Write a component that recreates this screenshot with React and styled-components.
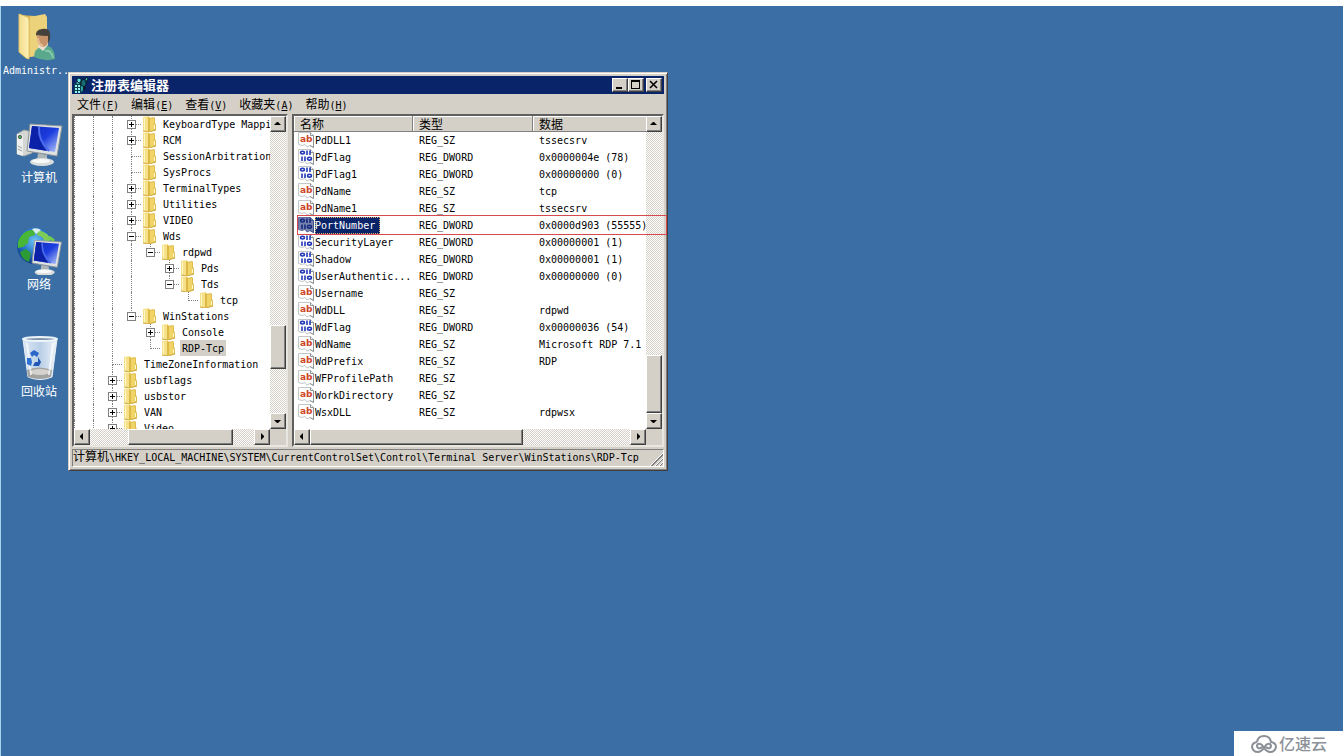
import React, { useState } from "react";
import styled, { createGlobalStyle, css } from "styled-components";

const GlobalStyle = createGlobalStyle`
    * {
        box-sizing: border-box;
    }

    body {
        margin: 0;
        background: #ffffff;
        font-family: "DejaVu Sans Mono", "Noto Sans CJK SC", monospace;
        font-size: 10px;
        color: #000000;
    }

    button {
        padding: 0;
        font: inherit;
        color: inherit;
    }
`;

const Screen = styled.div`
    min-height: 100vh;
    display: flex;
    flex-direction: column;
    border-top: 6px solid #ffffff;
`;

const Desktop = styled.main`
    position: relative;
    flex: 1;
    overflow: hidden;
    background: #3a6ea5;
    border-left: 1px solid #a5d5ee;
`;

const Cjk = styled.span`
    font-family: "Noto Sans CJK SC", sans-serif;
    font-size: 12px;
`;

/* ---------- desktop icons ---------- */

const Shortcuts = styled.nav`
    width: 76px;
    padding-top: 7px;
    display: flex;
    flex-direction: column;
    align-items: center;
    gap: 41px;
`;

const Shortcut = styled.a`
    height: 66px;
    display: flex;
    flex-direction: column;
    align-items: center;
    color: #ffffff;
    text-decoration: none;
    white-space: nowrap;
    line-height: ${(props) => (props.$cjk ? "18px" : "20px")};

    & > svg {
        flex: none;
        display: block;
    }
`;

/* ---------- window ---------- */

const raised = css`
    border: 1px solid;
    border-color: #ffffff #404040 #404040 #ffffff;
    box-shadow: inset -1px -1px 0 #808080;
    background: #d4d0c8;
`;

const Window = styled.section`
    position: absolute;
    left: 67px;
    top: 66px;
    width: 600px;
    padding: 2px;
    border: 1px solid;
    border-color: #d4d0c8 #404040 #404040 #d4d0c8;
    box-shadow: inset 1px 1px 0 #ffffff, inset -1px -1px 0 #808080;
    background: #d4d0c8;
`;

const WindowBody = styled.div`
    padding: 1px;
`;

const TitleBar = styled.header`
    height: 18px;
    padding: 0 2px 0 1px;
    display: flex;
    align-items: center;
    background: #0a246a;
    color: #ffffff;
`;

const Title = styled.h1`
    flex: 1;
    margin: 0 0 0 2px;
    font-family: "Noto Sans CJK SC", sans-serif;
    font-size: 13px;
    font-weight: 700;
    line-height: 18px;
`;

const TitleButton = styled.button`
    ${raised}
    width: 16px;
    height: 14px;
    margin-left: ${(props) => (props.$apart ? "2px" : "0")};

    & > svg {
        display: block;
    }
`;

const MenuBar = styled.nav`
    height: 20px;
    display: flex;
`;

const MenuItem = styled.button`
    padding: 0 7px 0 5px;
    border: 0;
    background: none;
    line-height: 20px;
    white-space: nowrap;
`;

const Panes = styled.div`
    display: grid;
    grid-template-columns: 216px minmax(0, 1fr);
    gap: 4px;
`;

const Pane = styled.div`
    height: 333px;
    display: grid;
    grid-template-columns: minmax(0, 1fr) 16px;
    grid-template-rows: minmax(0, 1fr) 16px;
    border: 2px solid;
    border-color: #606060 #e8e6e0 #e8e6e0 #606060;
    background: #d4d0c8;
`;

const Viewport = styled.div`
    overflow: hidden;
    background: #ffffff;
`;

const ScrollBar = styled.div`
    display: flex;
    flex-direction: ${(props) => (props.$vertical ? "column" : "row")};
    background: repeating-conic-gradient(#ffffff 0 25%, #d4d0c8 0 50%) 0 0 / 2px 2px;
`;

const ArrowButton = styled.button`
    ${raised}
    flex: none;
    width: 16px;
    height: 16px;

    & > svg {
        display: block;
    }
`;

const Track = styled.div`
    flex: 1;
    display: flex;
    flex-direction: inherit;
`;

const Thumb = styled.div`
    ${raised}
    flex: none;
    ${(props) => (props.$vertical
        ? css`height: ${props.$size}px; margin-top: ${props.$offset}px; width: 16px;`
        : css`width: ${props.$size}px; margin-left: ${props.$offset}px; height: 16px;`)}
`;

/* ---------- tree ---------- */

const Tree = styled.ul`
    margin: 0;
    padding: 0;
    list-style: none;
`;

const TreeRow = styled.li`
    height: 16px;
    display: flex;
    line-height: 18px;
    white-space: pre;
`;

const RootGuide = styled.span`
    flex: none;
    width: 10px;
    border-left: 1px dotted #808080;
`;

const Guide = styled.span`
    flex: none;
    width: 10px;
    margin-left: 9px;
    border-left: 1px ${(props) => (props.$blank ? "solid transparent" : "dotted #808080")};
`;

const Branch = styled.span`
    flex: none;
    width: 19px;
    display: grid;
    grid-template-columns: 9px 10px;
    grid-template-rows: 9px 7px;

    &::before {
        content: "";
        grid-area: 1 / 2;
        border-left: 1px dotted #808080;
        border-bottom: 1px dotted #808080;
    }

    &::after {
        content: "";
        grid-area: 2 / 2;
        border-left: ${(props) => (props.$last ? "0" : "1px dotted #808080")};
    }
`;

const Expander = styled.button`
    grid-area: 1 / 1 / 3 / 3;
    align-self: start;
    z-index: 1;
    width: 9px;
    height: 9px;
    margin: 4px 0 0 5px;
    border: 1px solid #808080;
    background: #ffffff;

    & > svg {
        display: block;
    }
`;

const FolderSlot = styled.span`
    flex: none;
    width: 20px;
    padding-left: 1px;

    & > svg {
        display: block;
    }
`;

const TreeLabel = styled.span`
    padding: 0 2px;
    background: ${(props) => (props.$selected ? "#d4d0c8" : "transparent")};
`;

/* ---------- value list ---------- */

const Table = styled.table`
    width: 100%;
    table-layout: fixed;
    border-collapse: separate;
    border-spacing: 0;
    text-align: left;
    white-space: nowrap;
`;

const HeadCell = styled.th`
    width: ${(props) => props.$width || "auto"};
    height: 16px;
    padding: 0 6px;
    border-right: 1px solid #808080;
    border-bottom: 1px solid #808080;
    box-shadow: inset 1px 1px 0 #ffffff;
    background: #d4d0c8;
    font-family: "Noto Sans CJK SC", sans-serif;
    font-size: 12px;
    font-weight: 400;
    line-height: 15px;

    &:last-child {
        border-right: 0;
    }
`;

const Cell = styled.td`
    height: 17px;
    padding: 0 0 0 6px;
    line-height: 17px;
`;

const NameCell = styled(Cell)`
    padding: 0 0 0 4px;

    & > div {
        height: 17px;
        display: flex;
    }

    & svg {
        flex: none;
    }
`;

const ValueName = styled.span`
    margin-left: 1px;
    padding: 0 5px 0 0;
    ${(props) => props.$selected && css`
        background: #0a246a;
        color: #ffffff;
        outline: 1px dotted #d8b070;
        outline-offset: -1px;
    `}
`;

const Highlight = styled.div`
    position: absolute;
    left: 228px;
    right: 0;
    top: 142px;
    height: 20px;
    border: 1px solid #d8494f;
    pointer-events: none;
`;

const StatusBar = styled.footer`
    height: 18px;
    margin-top: 2px;
    display: flex;
    justify-content: space-between;
    align-items: flex-end;
    border: 1px solid;
    border-color: #808080 #ffffff #ffffff #808080;
    line-height: 16px;
    white-space: nowrap;
`;

const Watermark = styled.div`
    position: absolute;
    right: 0;
    bottom: 0;
    height: 25px;
    padding: 0 16px 0 17px;
    display: flex;
    align-items: center;
    gap: 2px;
    background: #ffffff;
    color: #8c9198;
    font-family: "Noto Sans CJK SC", sans-serif;
    font-size: 16px;
    font-weight: 500;
    line-height: 25px;
`;

/* ---------- drawings ---------- */

function UserFolderIcon() {
    return (
        <svg width="48" height="48" viewBox="0 0 48 48">
            <defs>
                <linearGradient id="ufBack" x1="0" x2="1">
                    <stop offset="0" stopColor="#c9a23f" />
                    <stop offset="1" stopColor="#f6e08c" />
                </linearGradient>
                <linearGradient id="ufFront" x1="0" x2="1">
                    <stop offset="0" stopColor="#f3dc8c" />
                    <stop offset="1" stopColor="#fdf2b8" />
                </linearGradient>
            </defs>
            <path d="M5 2L20 3L31 4V42L14 44Z" fill="url(#ufBack)" />
            <path d="M15 4L30 1L32 4V40L15 44Z" fill="#ecd27a" />
            <path d="M4 1L12 4Q14 5 14 8L14 46L11 45L4 39Z" fill="url(#ufFront)" stroke="#e2c468" strokeWidth="1" />
            <path d="M19 44Q19 36 26 34L33 33Q40 35 40 46Q30 49 19 44Z" fill="#5aa98d" />
            <path d="M23 34L28 38L33 32V28H24Z" fill="#e9e0d0" />
            <path d="M30 38Q36 36 38 45" stroke="#87c9ac" strokeWidth="2" fill="none" />
            <ellipse cx="28" cy="25" rx="6" ry="9" fill="#c79368" />
            <path d="M21 23Q20 17 27 16Q34 15 35 20Q36 26 33 30L33 23Q27 23 22 22Z" fill="#45413b" />
            <path d="M23 25Q23 31 28 33" stroke="#e7bd93" strokeWidth="2" fill="none" />
        </svg>
    );
}

function Monitor() {
    return (
        <g>
            <path d="M23 33L32 35L32 41H22Z" fill="#aeb5b8" />
            <ellipse cx="27" cy="42" rx="12" ry="4" fill="#d9dddd" />
            <ellipse cx="26" cy="41" rx="9" ry="2" fill="#f7f8f8" />
            <path d="M15 4L47 6L42 36L12 31Z" fill="#dfe2e3" stroke="#8e9699" strokeWidth="1" />
            <path d="M17 6L44 8L40 32L14 28Z" fill="url(#screenBlue)" />
            <path d="M17 6L24 7Q22 19 32 31L14 28Z" fill="#0b21a8" />
            <path d="M24 7Q23 20 34 31" stroke="#4a6bea" strokeWidth="2" fill="none" />
        </g>
    );
}

function ComputerIcon() {
    return (
        <svg width="48" height="48" viewBox="0 0 48 48">
            <defs>
                <linearGradient id="screenBlue" x1="0" y1="0" x2="1" y2="1">
                    <stop offset="0" stopColor="#1029b8" />
                    <stop offset="0.5" stopColor="#1c3ddf" />
                    <stop offset="1" stopColor="#b9cbf8" />
                </linearGradient>
            </defs>
            <path d="M2 14L9 10L17 12V33L9 36L2 34Z" fill="#d3d6d3" stroke="#a1a7a4" strokeWidth="1" />
            <path d="M2 14L8 15V36L2 34Z" fill="#eef0ef" />
            <circle cx="5" cy="17" r="2" fill="#3d4c45" />
            <circle cx="5" cy="17" r="1" fill="#43d24f" />
            <path d="M3 26L7 28M3 29L7 31" stroke="#9aa09c" />
            <Monitor />
        </svg>
    );
}

function NetworkIcon() {
    return (
        <svg width="48" height="48" viewBox="0 0 48 48">
            <defs>
                <radialGradient id="globe" cx="0.5" cy="0.35" r="0.6">
                    <stop offset="0" stopColor="#6ec6f2" />
                    <stop offset="0.6" stopColor="#2a76cb" />
                    <stop offset="1" stopColor="#113f8d" />
                </radialGradient>
            </defs>
            <circle cx="20" cy="19" r="18" fill="url(#globe)" />
            <path d="M6 9Q11 2 19 3L20 8L14 10L13 16L8 20L3 21Q2 14 6 9Z" fill="#48b637" />
            <path d="M23 3Q33 5 36 13L31 16L27 10L22 8Z" fill="#7ccc55" />
            <path d="M5 25L11 22L16 26L14 35Q7 33 5 25Z" fill="#2d9b35" />
            <path d="M17 2Q22 0 26 3L21 7Z" fill="#d8f0ed" />
            <path d="M34 10L38 13L37 17" stroke="#71cb4c" strokeWidth="3" fill="none" />
            <g transform="translate(7 10) scale(0.84)">
                <Monitor />
            </g>
        </svg>
    );
}

function RecycleIcon() {
    return (
        <svg width="48" height="48" viewBox="0 0 48 48">
            <defs>
                <linearGradient id="bin" x1="0" x2="1">
                    <stop offset="0" stopColor="#dce9f4" />
                    <stop offset="0.5" stopColor="#b9cee6" />
                    <stop offset="1" stopColor="#edf4fa" />
                </linearGradient>
            </defs>
            <path d="M8 5H42L37 43Q25 48 13 43Z" fill="url(#bin)" stroke="#e8f1f8" />
            <path d="M12 36Q24 31 37 36L36 43Q25 47 13 43Z" fill="#a3a3a1" />
            <ellipse cx="25" cy="38" rx="10" ry="3" fill="#d4d2ce" />
            <path d="M12 9L16 41M38 9L34 41" stroke="#ffffff" strokeWidth="2" opacity="0.7" />
            <ellipse cx="25" cy="5" rx="17" ry="2" fill="#8095aa" stroke="#edf4f9" strokeWidth="2" />
            <path d="M15 19L19 16L24 19L22 23L19 21L17 23Z" fill="#2b66c9" />
            <path d="M12 24L16 24L17 28L16 32L12 30Z" fill="#2f70d4" />
            <path d="M23 23L26 28L24 32H18L20 28L23 28Z" fill="#2056b8" />
        </svg>
    );
}

function RegeditIcon() {
    return (
        <svg width="16" height="16" viewBox="0 0 16 16">
            <path d="M1 7L4 5H11V13L8 16H1Z" fill="#0c3f49" />
            <path d="M2 8H4V10H2ZM5 8H7V10H5ZM2 11H4V13H2ZM5 11H7V13H5ZM2 14H4V16H2ZM5 14H7V16H5Z" fill="#8ff4f6" />
            <path d="M3 6L5 5L7 6L5 7Z" fill="#49cdd4" />
            <path d="M8 8L10 7V13L8 15Z" fill="#2aa3ad" />
            <path d="M4 2L6 1L8 2V5L6 6L4 4Z" fill="#5adfe5" stroke="#072b33" />
            <path d="M8 4L11 2L13 4V8L11 10L8 8Z" fill="#156b76" stroke="#06161c" />
            <path d="M12 2L14 0L15 2L14 4L12 4Z" fill="#2fb9c2" stroke="#06161c" />
            <path d="M11 9L13 11L10 14Z" fill="#06161c" />
        </svg>
    );
}

function FolderIcon() {
    return (
        <svg width="16" height="16" viewBox="0 0 16 16">
            <path d="M7 2L12 1L13 2V7L14 9V14L7 16Z" fill="#dfbd4c" />
            <path d="M8 3L12 2V14L8 15Z" fill="#f0d468" />
            <path d="M1 1L7 0L8 2V15L7 16L1 15Z" fill="#f6e18a" />
            <path d="M6 1L8 2V15L6 16Z" fill="#dcb845" />
            <path d="M2.5 2V14" stroke="#fff7c8" />
            <path d="M12.5 9V13" stroke="#fff6cf" />
            <path d="M1 15L7 16L14 14" stroke="#cfac45" fill="none" />
        </svg>
    );
}

function ValueIcon({ type, selected }) {
    const page = "M0.5 0.5H12.5L15.5 3.5V15.5L12 13.5L9 15L7 12.5L4 13.5L0.5 12.5Z";
    return (
        <svg width="16" height="16" viewBox="0 0 16 16">
            <path d={page} fill={selected ? "#7482ac" : "#fdfdfc"} stroke={selected ? "#596a9c" : "#c3c7ca"} />
            <path d="M12.5 0.5V3.5H15.5V15.5L12 13.5" fill="none" stroke={selected ? "#44558c" : "#8b9397"} />
            {type === "REG_SZ" ? (
                <text x="2" y="10" fontFamily="DejaVu Sans" fontSize="9" fontWeight="700" fill="#cf4527">ab</text>
            ) : (
                <g fill="none" stroke={selected ? "#17297f" : "#2438b8"} strokeWidth="1.6">
                    <ellipse cx="4.5" cy="3.6" rx="1.9" ry="1.4" />
                    <path d="M9 1.5V6M12 1.5V6" />
                    <path d="M4 7.5V12M7 7.5V12" />
                    <ellipse cx="11.5" cy="9.7" rx="1.9" ry="1.4" />
                </g>
            )}
        </svg>
    );
}

const arrows = {
    up: "M7 5L10 8H3L6 5Z",
    down: "M3 6H10L7 9H6Z",
    left: "M5 6L8 3V10L5 7Z",
    right: "M9 6L6 3V10L9 7Z",
};

function Arrow({ to }) {
    return (
        <ArrowButton type="button" aria-label={to}>
            <svg width="14" height="14" viewBox="0 0 14 14">
                <path d={arrows[to]} fill="#000000" />
            </svg>
        </ArrowButton>
    );
}

function Scroll({ vertical, offset, size }) {
    return (
        <ScrollBar $vertical={vertical}>
            <Arrow to={vertical ? "up" : "left"} />
            <Track>
                <Thumb $vertical={vertical} $offset={offset} $size={size} />
            </Track>
            <Arrow to={vertical ? "down" : "right"} />
        </ScrollBar>
    );
}

/* ---------- data ---------- */

const shortcuts = [
    { label: "Administr...", Icon: UserFolderIcon },
    { label: "计算机", cjk: true, Icon: ComputerIcon },
    { label: "网络", cjk: true, Icon: NetworkIcon },
    { label: "回收站", cjk: true, Icon: RecycleIcon },
];

const menus = [
    ["文件", "F"],
    ["编辑", "E"],
    ["查看", "V"],
    ["收藏夹", "A"],
    ["帮助", "H"],
];

// guides: "|" draws a line through the row, " " leaves the column empty
const keys = [
    { name: "KeyboardType Mappi", guides: "||", sign: "+" },
    { name: "RCM", guides: "||", sign: "+" },
    { name: "SessionArbitration", guides: "||" },
    { name: "SysProcs", guides: "||" },
    { name: "TerminalTypes", guides: "||", sign: "+" },
    { name: "Utilities", guides: "||", sign: "+" },
    { name: "VIDEO", guides: "||", sign: "+" },
    { name: "Wds", guides: "||", sign: "-" },
    { name: "rdpwd", guides: "|||", sign: "-", last: true },
    { name: "Pds", guides: "||| ", sign: "+" },
    { name: "Tds", guides: "||| ", sign: "-", last: true },
    { name: "tcp", guides: "|||  ", last: true },
    { name: "WinStations", guides: "||", sign: "-", last: true },
    { name: "Console", guides: "|| ", sign: "+" },
    { name: "RDP-Tcp", guides: "|| ", last: true },
    { name: "TimeZoneInformation", guides: "|" },
    { name: "usbflags", guides: "|", sign: "+" },
    { name: "usbstor", guides: "|", sign: "+" },
    { name: "VAN", guides: "|", sign: "+" },
    { name: "Video", guides: "|", sign: "+" },
];

const values = [
    ["PdDLL1", "REG_SZ", "tssecsrv"],
    ["PdFlag", "REG_DWORD", "0x0000004e (78)"],
    ["PdFlag1", "REG_DWORD", "0x00000000 (0)"],
    ["PdName", "REG_SZ", "tcp"],
    ["PdName1", "REG_SZ", "tssecsrv"],
    ["PortNumber", "REG_DWORD", "0x0000d903 (55555)"],
    ["SecurityLayer", "REG_DWORD", "0x00000001 (1)"],
    ["Shadow", "REG_DWORD", "0x00000001 (1)"],
    ["UserAuthentic...", "REG_DWORD", "0x00000000 (0)"],
    ["Username", "REG_SZ", ""],
    ["WdDLL", "REG_SZ", "rdpwd"],
    ["WdFlag", "REG_DWORD", "0x00000036 (54)"],
    ["WdName", "REG_SZ", "Microsoft RDP 7.1"],
    ["WdPrefix", "REG_SZ", "RDP"],
    ["WFProfilePath", "REG_SZ", ""],
    ["WorkDirectory", "REG_SZ", ""],
    ["WsxDLL", "REG_SZ", "rdpwsx"],
];

function KeyTree({ selected, onSelect }) {
    return (
        <Tree>
            {keys.map((key) => (
                <TreeRow key={key.name} onClick={() => onSelect(key.name)}>
                    <RootGuide />
                    {key.guides.split("").map((guide, index) => (
                        <Guide key={index} $blank={guide === " "} />
                    ))}
                    <Branch $last={key.last}>
                        {key.sign && (
                            <Expander type="button" aria-label={key.sign === "+" ? "展开" : "折叠"}>
                                <svg width="7" height="7" viewBox="0 0 7 7">
                                    <path d={key.sign === "+" ? "M1 3H6V4H1ZM3 1H4V6H3Z" : "M1 3H6V4H1Z"} fill="#000000" />
                                </svg>
                            </Expander>
                        )}
                    </Branch>
                    <FolderSlot><FolderIcon /></FolderSlot>
                    <TreeLabel $selected={selected === key.name}>{key.name}</TreeLabel>
                </TreeRow>
            ))}
        </Tree>
    );
}

function ValueTable({ selected, onSelect }) {
    return (
        <Table>
            <thead>
                <tr>
                    <HeadCell $width="119px">名称</HeadCell>
                    <HeadCell $width="120px">类型</HeadCell>
                    <HeadCell>数据</HeadCell>
                </tr>
            </thead>
            <tbody>
                {values.map(([name, type, data]) => (
                    <tr key={name} onClick={() => onSelect(name)}>
                        <NameCell>
                            <div>
                                <ValueIcon type={type} selected={selected === name} />
                                <ValueName $selected={selected === name}>{name}</ValueName>
                            </div>
                        </NameCell>
                        <Cell>{type}</Cell>
                        <Cell>{data}</Cell>
                    </tr>
                ))}
            </tbody>
        </Table>
    );
}

function App() {
    const [currentKey, setCurrentKey] = useState("RDP-Tcp");
    const [currentValue, setCurrentValue] = useState("PortNumber");

    return (
        <Screen>
            <GlobalStyle />
            <Desktop>
                <Shortcuts>
                    {shortcuts.map(({ label, cjk, Icon }) => (
                        <Shortcut key={label} href="#" $cjk={cjk}>
                            <Icon />
                            {cjk ? <Cjk>{label}</Cjk> : label}
                        </Shortcut>
                    ))}
                </Shortcuts>

                <Window>
                    <WindowBody>
                        <TitleBar>
                            <RegeditIcon />
                            <Title>注册表编辑器</Title>
                            <TitleButton type="button" aria-label="最小化">
                                <svg width="14" height="12" viewBox="0 0 14 12"><path d="M3 8H9V10H3Z" /></svg>
                            </TitleButton>
                            <TitleButton type="button" aria-label="最大化">
                                <svg width="14" height="12" viewBox="0 0 14 12">
                                    <path d="M2 1H11V10H2ZM3 3V9H10V3Z" fillRule="evenodd" />
                                </svg>
                            </TitleButton>
                            <TitleButton type="button" aria-label="关闭" $apart>
                                <svg width="14" height="12" viewBox="0 0 14 12">
                                    <path d="M3 2L10 9M10 2L3 9" stroke="#000000" strokeWidth="1.6" />
                                </svg>
                            </TitleButton>
                        </TitleBar>
                        <MenuBar>
                            {menus.map(([label, letter]) => (
                                <MenuItem key={letter} type="button">
                                    <Cjk>{label}</Cjk>(<u>{letter}</u>)
                                </MenuItem>
                            ))}
                        </MenuBar>
                        <Panes>
                            <Pane>
                                <Viewport><KeyTree selected={currentKey} onSelect={setCurrentKey} /></Viewport>
                                <Scroll vertical offset={193} size={44} />
                                <Scroll offset={38} size={105} />
                            </Pane>
                            <Pane>
                                <Viewport><ValueTable selected={currentValue} onSelect={setCurrentValue} /></Viewport>
                                <Scroll vertical offset={223} size={58} />
                                <Scroll offset={0} size={213} />
                            </Pane>
                        </Panes>
                        <StatusBar>
                            <span>
                                <Cjk>计算机</Cjk>\HKEY_LOCAL_MACHINE\SYSTEM\CurrentControlSet\Control\Terminal Server\WinStations\RDP-Tcp
                            </span>
                            <svg width="13" height="13" viewBox="0 0 13 13">
                                <path d="M0 13L13 0M5 13L13 5M9 13L13 9" stroke="#ffffff" />
                                <path d="M1 13L13 1M2 13L13 2M6 13L13 6M10 13L13 10" stroke="#808080" />
                            </svg>
                        </StatusBar>
                    </WindowBody>
                    <Highlight />
                </Window>

                <Watermark>
                    <svg width="26" height="20" viewBox="0 0 26 20" fill="none" stroke="#8c9198" strokeWidth="2">
                        <path d="M6 8Q7 2 13 2Q19 2 20 8Q25 9 25 13Q24 18 19 18Q16 18 13 14L11 11Q9 9 7 10Q5 12 7 14Q10 15 12 12" />
                        <path d="M6 8Q1 9 1 13Q2 18 7 18Q10 18 13 14L15 11Q17 9 19 10Q21 12 19 14Q17 15 15 13" />
                    </svg>
                    亿速云
                </Watermark>
            </Desktop>
        </Screen>
    );
}

export default App;
